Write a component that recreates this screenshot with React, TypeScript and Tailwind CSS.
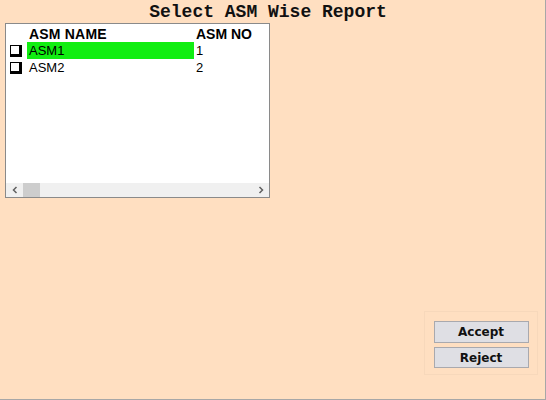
import React from 'react';

const rows = [
  { name: 'ASM1', no: '1', selected: true },
  { name: 'ASM2', no: '2', selected: false },
];

function CheckBox() {
  return (
    <span className="block w-[12px] h-[12px] border border-black border-r-[3px] border-b-[3px] bg-white" />
  );
}

export default function App() {
  return (
    <div
      className="relative w-[546px] h-[400px] bg-[#ffdfc1] border-r border-b border-[#a7a7a7] overflow-hidden"
      style={{ fontFamily: '"Liberation Sans", Arial, sans-serif' }}
    >
      {/* Title */}
      <div className="h-[23px] flex items-end justify-center pr-[9px]">
        <h1
          className="text-[18px] font-bold leading-[22px] text-[#111]"
          style={{ fontFamily: '"Liberation Mono", "Courier New", monospace' }}
        >
          Select ASM Wise Report
        </h1>
      </div>

      {/* Grid */}
      <div className="ml-[5px] w-[265px] h-[175px] border border-[#8a8a8a] bg-white flex flex-col">
        <div className="flex-1 pt-[2px]">
          <div className="flex h-[16px] items-center text-[14px] font-bold text-black">
            <span className="w-[23px]" />
            <span className="w-[167px] tracking-[0.2px]">ASM NAME</span>
            <span>ASM NO</span>
          </div>
          {rows.map((r) => (
            <div key={r.name} className="flex h-[17px] items-center text-[13px] text-black">
              <span className="w-[20px] pl-[4px] flex items-center">
                <CheckBox />
              </span>
              <span
                className={`w-[167px] h-[17px] ml-[1px] pl-[2px] flex items-center ${
                  r.selected ? 'bg-[#11ee11]' : ''
                }`}
              >
                {r.name}
              </span>
              <span className="pl-[2px]">{r.no}</span>
            </div>
          ))}
        </div>
        {/* Horizontal scrollbar */}
        <div className="h-[14px] bg-[#f0f0f0] flex items-center">
          <span className="w-[17px] flex justify-center text-[#606060]">
            <svg width="6" height="8" viewBox="0 0 6 8">
              <path d="M4.5 1 L1.5 4 L4.5 7" stroke="currentColor" strokeWidth="1.5" fill="none" />
            </svg>
          </span>
          <span className="w-[17px] h-[14px] bg-[#cdcdcd]" />
          <span className="flex-1" />
          <span className="w-[17px] flex justify-center text-[#606060]">
            <svg width="6" height="8" viewBox="0 0 6 8">
              <path d="M1.5 1 L4.5 4 L1.5 7" stroke="currentColor" strokeWidth="1.5" fill="none" />
            </svg>
          </span>
        </div>
      </div>

      {/* Buttons panel */}
      <div className="absolute left-[424px] top-[311px] w-[114px] h-[64px] border border-[#f7d8bb] flex flex-col items-center pt-[9px] gap-[4px]">
        <button
          className="w-[95px] h-[22px] bg-[#dfdfe4] border border-[#a9a9ae] text-[12px] font-bold text-[#111] leading-none"
          style={{ fontFamily: '"DejaVu Sans", Tahoma, sans-serif' }}
        >
          Accept
        </button>
        <button
          className="w-[95px] h-[21px] bg-[#dfdfe4] border border-[#a9a9ae] text-[12px] font-bold text-[#111] leading-none"
          style={{ fontFamily: '"DejaVu Sans", Tahoma, sans-serif' }}
        >
          Reject
        </button>
      </div>
    </div>
  );
}
